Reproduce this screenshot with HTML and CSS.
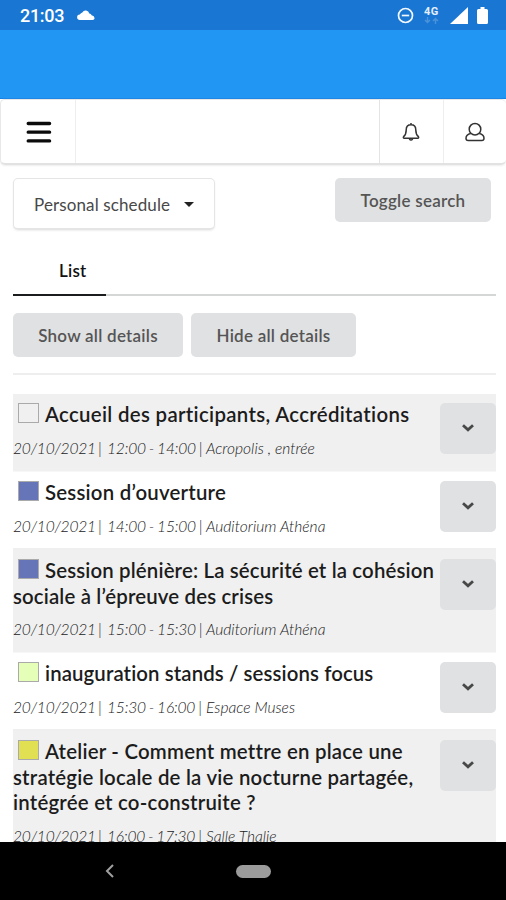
FILE: index.html
```html
<!DOCTYPE html>
<html lang="fr">
<head>
<meta charset="utf-8">
<title>Personal schedule</title>
<link rel="stylesheet" href="styles.css">
</head>
<body>
<div class="phone">
  <div class="status">
    <span class="clock">21:03</span>
    <svg class="cloud" width="18" height="12" viewBox="0 0 18 12"><path d="M3 11a2.800 2.800 0 0 1-.2-5.600Q3.800 3.800 5.300 3.400A3.800 3.800 0 0 1 12.300 4.400Q14 4.600 14.600 6.300 17.400 6.700 17.600 9.200 17.500 11 15.500 11Z" fill="#fff"/></svg>
    <svg class="dnd" width="17" height="17" viewBox="0 0 17 17" fill="none" stroke="#f3f8fd" stroke-width="1.7"><circle cx="8.5" cy="8.5" r="7"/><path d="M4.8 8.5h7.4"/></svg>
    <div class="net"><span class="net-label">4G</span>
      <svg width="15" height="7" viewBox="0 0 15 7" fill="none" stroke="#4a92da" stroke-width="1.5"><path d="M3.5 0v5M1 3l2.5 2.5L6 3M11.5 7V2M9 4l2.500-2.500L14 4"/></svg>
    </div>
    <svg class="signal" width="18" height="17" viewBox="0 0 18 17"><path d="M0 17 18 0v17Z" fill="#fff"/></svg>
    <svg class="battery" width="11" height="17" viewBox="0 0 11 17"><path d="M3.500 0h4v2h2q1.500 0 1.500 1.500v12q0 1.500-1.500 1.500h-8Q0 17 0 15.500v-12Q0 2 1.500 2h2Z" fill="#fff"/></svg>
  </div>
  <div class="banner"></div>
  <nav class="menu">
    <div class="menu-item burger"><svg width="26" height="22" viewBox="0 0 26 22" stroke="#0b0b0b" stroke-width="3.300" stroke-linecap="round"><path d="M2.200 2.500h21.400M2.200 11.200h21.400M2.200 19.900h21.400"/></svg></div>
    <div class="menu-space"></div>
    <div class="menu-item bell"><svg width="18" height="20" viewBox="0 0 18 20" fill="none" stroke="#333" stroke-width="1.500" stroke-linejoin="round"><path d="M9 1v1.800M9 2.800C5.800 2.800 4.200 5 4.200 8c0 4-.8 5.200-2.600 6.700-.5.600-.2 1.500.6 1.500h13.600c.8 0 1.100-.9.600-1.500C14.600 13.200 13.800 12 13.800 8c0-3-1.600-5.200-4.800-5.200Z"/><path d="M7.300 16.800q1.700 2.600 3.400 0"/></svg></div>
    <div class="menu-item user"><svg width="20" height="20" viewBox="0 0 20 20" fill="none" stroke="#333" stroke-width="1.500" stroke-linejoin="round"><circle cx="10" cy="7.200" r="5.800"/><path d="M5.800 11.500C2.800 12.100 1 13.700 1 16.200q0 2.300 2.200 2.300h13.600q2.200 0 2.200-2.300c0-2.500-1.800-4.100-4.800-4.700"/></svg></div>
  </nav>
  <main class="content">
    <div class="top">
      <div class="dropdown"><span>Personal schedule</span><i class="caret"></i></div>
      <button class="btn toggle">Toggle search</button>
    </div>
    <div class="tabs"><div class="tab">List</div></div>
    <div class="actions"><button class="btn show">Show all details</button><button class="btn hide">Hide all details</button></div>
    <div class="rows">
      <article class="row odd">
        <div class="text"><h2><i class="swatch"></i>Accueil des participants, Accréditations</h2><p><span class="date">20/10/2021 |</span> <span class="time">12:00 - 14:00 |</span> <span>Acropolis , entrée</span></p></div>
        <button class="more"><svg width="14" height="10" viewBox="0 0 14 10"><path d="m2 2.200 5 4.600 5-4.600"/></svg></button>
      </article>
      <article class="row">
        <div class="text"><h2><i class="swatch blue"></i>Session d’ouverture</h2><p><span class="date">20/10/2021 |</span> <span class="time">14:00 - 15:00 |</span> <span>Auditorium Athéna</span></p></div>
        <button class="more"><svg width="14" height="10" viewBox="0 0 14 10"><path d="m2 2.200 5 4.600 5-4.600"/></svg></button>
      </article>
      <article class="row odd">
        <div class="text"><h2><i class="swatch blue"></i>Session plénière: La sécurité et la cohésion<br>sociale à l’épreuve des crises</h2><p><span class="date">20/10/2021 |</span> <span class="time">15:00 - 15:30 |</span> <span>Auditorium Athéna</span></p></div>
        <button class="more"><svg width="14" height="10" viewBox="0 0 14 10"><path d="m2 2.200 5 4.600 5-4.600"/></svg></button>
      </article>
      <article class="row">
        <div class="text"><h2><i class="swatch green"></i>inauguration stands / sessions focus</h2><p><span class="date">20/10/2021 |</span> <span class="time">15:30 - 16:00 |</span> <span>Espace Muses</span></p></div>
        <button class="more"><svg width="14" height="10" viewBox="0 0 14 10"><path d="m2 2.200 5 4.600 5-4.600"/></svg></button>
      </article>
      <article class="row odd">
        <div class="text"><h2><i class="swatch yellow"></i>Atelier - Comment mettre en place une<br>stratégie locale de la vie nocturne partagée,<br>intégrée et co-construite ?</h2><p><span class="date">20/10/2021 |</span> <span class="time">16:00 - 17:30 |</span> <span>Salle Thalie</span></p></div>
        <button class="more"><svg width="14" height="10" viewBox="0 0 14 10"><path d="m2 2.200 5 4.600 5-4.600"/></svg></button>
      </article>
    </div>
  </main>
  <footer class="navbar">
    <svg class="back" width="10" height="14" viewBox="0 0 10 14" fill="none" stroke="#a0a0a0" stroke-width="2"><path d="M8 1 2 7l6 6"/></svg>
    <div class="pill"></div>
  </footer>
</div>
</body>
</html>
```
FILE: styles.css
```css
* { box-sizing: border-box; }
body { margin: 0; font-family: Lato, "Liberation Sans", sans-serif; font-variant-ligatures: none; background: #fff; }
svg { display: block; flex: none; }
.phone { width: 506px; height: 900px; overflow: hidden; display: flex; flex-direction: column; }
.status { height: 30px; flex: none; background: #1976d2; display: flex; align-items: center; padding: 0 18px 0 20px; color: #fff; }
.clock { width: 57px; font: 500 18px/30px Roboto, sans-serif; padding-top: 2px; letter-spacing: -.3px; }
.dnd { margin-left: auto; }
.net { width: 16px; margin: 0 10px; height: 18px; }
.net-label { display: block; font: 700 11px/11px Roboto, sans-serif; letter-spacing: .4px; color: #e4effa; }
.signal { margin-right: 9px; }
.banner { height: 69px; flex: none; background: #2196f3; border-bottom: 1px solid #1380e5; }
.menu { height: 66px; flex: none; display: flex; padding-left: 1px; border: 1px solid #e8e8e8; border-right: 0; border-bottom: 2px solid #e2e2e2; border-radius: 5px; box-shadow: 0 1px 2px #eee; }
.menu-item { display: flex; align-items: center; justify-content: center; }
.burger { width: 74px; border-right: 1px solid #eee; }
.menu-space { flex: 1; }
.bell { width: 64px; padding-right: 2px; border-left: 1px solid #e4e4e4; }
.user { width: 63px; padding-right: 1px; border-left: 1px solid #eee; }
.content { flex: 1; min-height: 0; overflow: hidden; padding: 13px 10px 0 13px; }
.top { height: 52px; display: flex; justify-content: space-between; padding-right: 5px; }
.dropdown { width: 202px; height: 52px; display: flex; align-items: center; padding: 2px 0 0 20px; border: 1px solid #e5e5e5; border-bottom-width: 2px; border-radius: 5px; box-shadow: 0 1px 2px #eee; font-size: 17px; letter-spacing: .12px; color: #484848; }
.caret { margin-left: 14px; border: 5px solid transparent; border-top-color: #222; border-bottom: 0; }
button { margin: 0; border: 0; padding: 0; font: inherit; }
.btn { height: 44px; border-radius: 5px; background: #e0e1e2; color: #555; font-size: 17px; font-weight: 600; letter-spacing: .25px; }
.toggle { width: 156px; }
.tabs { width: 483px; height: 66px; border-bottom: 2px solid #d5d6d6; display: flex; align-items: flex-end; }
.tab { width: 93px; height: 49px; margin-bottom: -2px; border-bottom: 2px solid #1b1c1d; padding-left: 46px; font-size: 17px; font-weight: 600; letter-spacing: .2px; line-height: 47px; color: #111; }
.actions { width: 483px; height: 79px; display: flex; gap: 8px; padding-top: 17px; border-bottom: 2px solid #eee; }
.show { width: 170px; }
.hide { width: 165px; }
.rows { width: 483px; margin-top: 19px; }
.row { display: flex; justify-content: space-between; height: 78px; border-bottom: 2px solid #efefef; }
.row.odd { background: #f0f0f0; border-bottom: 1px solid #f7f7f7; }
.row:nth-child(3) { height: 103px; }
.row:nth-child(5) { height: 130px; }
.text { white-space: nowrap; width: 427px; }
h2 { margin: 0; padding-top: 8px; font-size: 20.400px; line-height: 25.500px; font-weight: 600; letter-spacing: .22px; color: #1c1c1c; }
.row:nth-child(1) h2 { letter-spacing: .32px; }
.row:nth-child(3) h2 { letter-spacing: .15px; }
.row:nth-child(4) h2 { letter-spacing: .1px; }
p { display: flex; gap: 4px; margin: 7px 0 0; font-size: 15.600px; line-height: 26px; font-style: italic; font-weight: 300; color: #222; }
.date { width: 90px; letter-spacing: -.2px; word-spacing: -1.800px; }
.time { width: 95px; letter-spacing: -.2px; word-spacing: -.800px; }
.swatch { display: inline-block; width: 21px; height: 20px; margin: 0 6px 0 5px; border: 1px solid #aaa; vertical-align: -1px; }
.blue { background: #6675b7; }
.green { background: #e6ffb8; }
.yellow { background: #e1e052; }
.more { width: 56px; height: 51px; margin-top: 9px; flex: none; border-radius: 5px; background: #e0e1e2; display: flex; align-items: center; justify-content: center; }
.more svg { margin-top: -2px; }
.more path { fill: none; stroke: #484848; stroke-width: 2.800; }
.navbar { height: 58px; flex: none; background: #000; display: flex; align-items: center; padding-left: 105px; }
.pill { width: 35px; height: 13px; margin-left: 121px; border-radius: 7px; background: #9b9b9b; }
```
